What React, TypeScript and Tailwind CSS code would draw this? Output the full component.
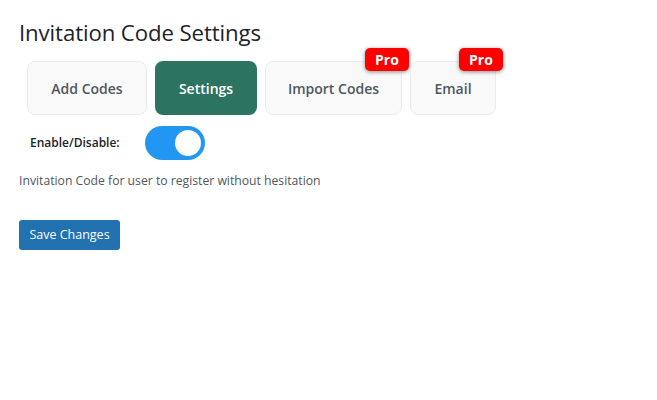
import { useState } from "react";

type Tab = { key: string; label: string; width: string; pro?: boolean };

const tabs: Tab[] = [
  { key: "add", label: "Add Codes", width: "w-[120px]" },
  { key: "settings", label: "Settings", width: "w-[102px]" },
  { key: "import", label: "Import Codes", width: "w-[137px]", pro: true },
  { key: "email", label: "Email", width: "w-[86px]", pro: true },
];

export default function App() {
  const [active, setActive] = useState("settings");
  const [enabled, setEnabled] = useState(true);

  return (
    <div className="min-h-[400px] bg-white px-[19px] pt-[19px] font-['Open_Sans',sans-serif] text-[#3c434a]">
      <h1 className="text-[22.2px] leading-[28px] text-[#1d2327] tracking-[-0.1px]">Invitation Code Settings</h1>

      {/* Tabs */}
      <div className="mt-[14px] ml-[8px] flex gap-[8px]">
        {tabs.map((tab) => {
          const isActive = active === tab.key;
          return (
            <button
              key={tab.key}
              onClick={() => setActive(tab.key)}
              className={
                isActive
                  ? `relative h-[54px] ${tab.width} rounded-[8px] bg-[#2c7360] text-[14px] font-semibold text-white`
                  : `relative h-[54px] ${tab.width} rounded-[8px] border border-[#ececec] bg-[#f9f9f9] text-[14px] font-semibold text-[#50575e]`
              }
            >
              {tab.label}
              {tab.pro && (
                <span className="absolute -top-[14px] -right-[8px] flex h-[23px] w-[44px] items-center justify-center rounded-[5px] bg-[#ff0000] text-[14px] font-bold text-white shadow-[0_1px_4px_rgba(0,0,0,0.45)]">
                  Pro
                </span>
              )}
            </button>
          );
        })}
      </div>

      {/* Enable toggle */}
      <div className="mt-[11px] flex items-center">
        <span className="w-[126px] pl-[11px] text-[12px] font-semibold text-[#1d2327]">Enable/Disable:</span>
        <button
          onClick={() => setEnabled(!enabled)}
          className={
            enabled
              ? "flex h-[34px] w-[60px] items-center justify-end rounded-full bg-[#2196f3] px-[4px]"
              : "flex h-[34px] w-[60px] items-center justify-start rounded-full bg-[#cccccc] px-[4px]"
          }
        >
          <span className="h-[26px] w-[26px] rounded-full bg-white" />
        </button>
      </div>

      <p className="mt-[12px] text-[12.2px] text-[#50575e]">Invitation Code for user to register without hesitation</p>

      <button className="mt-[30px] h-[30px] w-[101px] rounded-[3px] bg-[#2271b1] text-[12.5px] text-white">
        Save Changes
      </button>
    </div>
  );
}
